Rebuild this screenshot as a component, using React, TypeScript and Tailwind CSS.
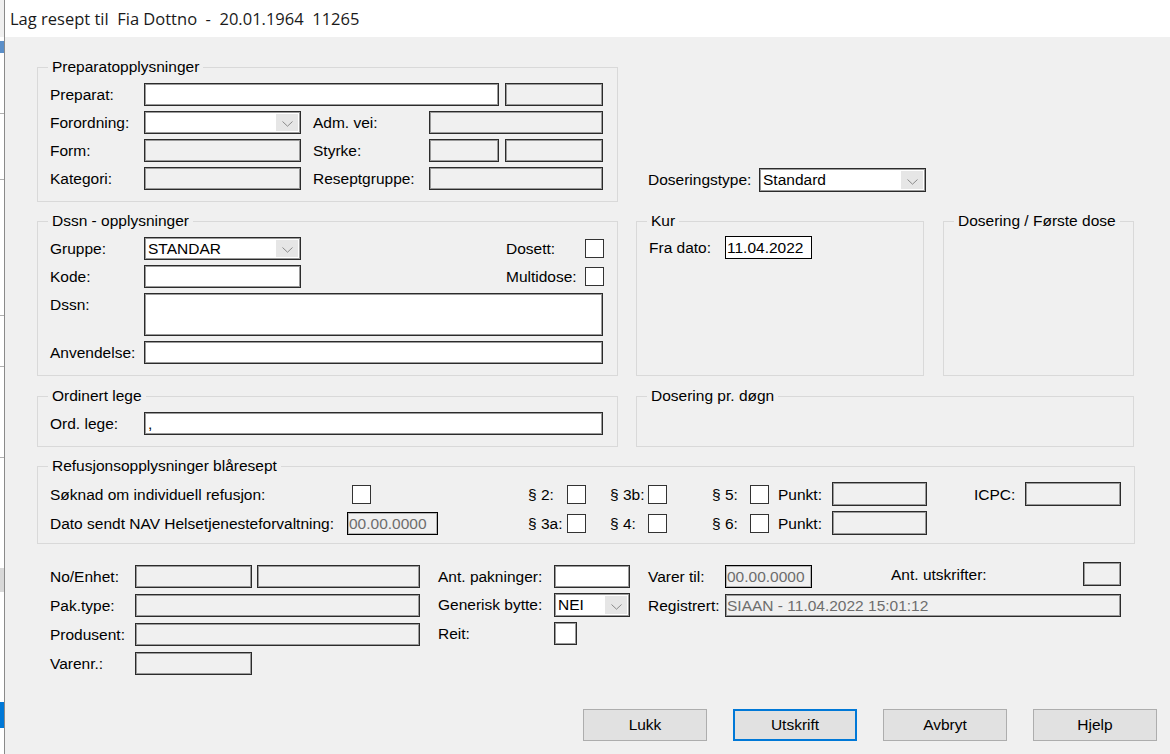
import React from "react";

type FP = { className?: string; white?: boolean; grey?: boolean; children?: React.ReactNode };

function Field({ className = "", white = false, grey = false, children }: FP) {
  return (
    <div
      className={`${white ? "bg-white" : "bg-[#f0f0f0]"} ${grey ? "text-[#6d6d6d]" : "text-black"} h-[23px] shrink-0 border border-[#2b2b2b] shadow-[inset_0_0_0_1px_#9a9a9a] px-[3px] leading-[21px] overflow-hidden whitespace-nowrap ${className}`}
    >
      {children}
    </div>
  );
}

function DateField({ className = "", grey = false, children }: FP) {
  return (
    <div
      className={`${grey ? "bg-[#f0f0f0] text-[#6d6d6d] shadow-[inset_0_0_0_1px_#b4b4b4]" : "bg-white text-black"} h-[23px] shrink-0 border border-black px-[1px] leading-[21px] overflow-hidden whitespace-nowrap ${className}`}
    >
      {children}
    </div>
  );
}

function Chevron() {
  return (
    <svg width="11" height="6" viewBox="0 0 11 6">
      <path d="M0.5 0.5 L5.5 5.2 L10.5 0.5" fill="none" stroke="#8a8a8a" strokeWidth="1" />
    </svg>
  );
}

function Select({ className = "", children }: FP) {
  return (
    <div
      className={`flex shrink-0 border border-[#2b2b2b] shadow-[inset_0_0_0_1px_#9a9a9a] bg-white ${className}`}
    >
      <div className="flex-1 px-[3px] leading-[21px] whitespace-nowrap overflow-hidden">{children}</div>
      <div className="w-[22px] my-[2px] mr-[2px] bg-[#e6e6e6] flex items-end justify-center pb-[4px]">
        <Chevron />
      </div>
    </div>
  );
}

function Check({ className = "" }: FP) {
  return <div className={`w-[19px] h-[19px] shrink-0 bg-white border border-[#333333] ${className}`} />;
}

function Group({
  title,
  className = "",
  inner = "",
  children,
}: {
  title: string;
  className?: string;
  inner?: string;
  children?: React.ReactNode;
}) {
  return (
    <fieldset className={`border border-[#d9d9d9] min-w-0 shrink-0 ${className}`}>
      <legend className="ml-[10px] px-[4px] leading-[16px]">{title}</legend>
      <div className={inner}>{children}</div>
    </fieldset>
  );
}

export default function App() {
  return (
    <div className="w-[1170px] h-[754px] flex overflow-hidden font-['Liberation_Sans',Arial,sans-serif] text-[15.5px] text-black bg-white">
      {/* background window sliver */}
      <div className="w-[4px] shrink-0 flex flex-col bg-white">
        <div className="h-[37px] bg-[#f0f0f0]" />
        <div className="h-[12px] bg-[#5b8fc9] mt-[4px]" />
        <div className="h-px bg-[#b0b0b0] mt-[60px]" />
        <div className="h-px bg-[#b0b0b0] mt-[65px]" />
        <div className="h-px bg-[#b0b0b0] mt-[135px]" />
        <div className="h-px bg-[#b0b0b0] mt-[50px]" />
        <div className="h-px bg-[#b0b0b0] mt-[90px]" />
        <div className="h-[24px] bg-[#d8d8d8] mt-[110px]" />
        <div className="h-[26px] bg-[#0078d7] mt-[110px]" />
      </div>

      <div className="flex-1 flex flex-col border-l border-[#8a8a8a]">
        {/* title bar */}
        <div className="h-[37px] shrink-0 bg-white pl-[5px] leading-[37px] font-['Open_Sans','Noto_Sans',sans-serif] text-[16.5px] text-[#1a1a1a] whitespace-pre">
          Lag resept til  Fia Dottno  -  20.01.1964  11265
        </div>

        {/* body */}
        <div className="flex-1 flex flex-col bg-[#f0f0f0] pl-[32px] pt-[22px]">
          {/* row 1 */}
          <div className="flex items-end">
            <Group title="Preparatopplysninger" className="w-[581px]" inner="pl-[12px] pt-[8px] pb-[11px] flex flex-col gap-[5px]">
              <div className="flex h-[23px]">
                <span className="w-[94px] shrink-0 leading-[23px]">Preparat:</span>
                <Field white className="w-[355px]" />
                <Field className="w-[98px] ml-[6px]" />
              </div>
              <div className="flex h-[23px]">
                <span className="w-[94px] shrink-0 leading-[23px]">Forordning:</span>
                <Select className="w-[157px] h-[23px]" />
                <span className="w-[116px] ml-[12px] shrink-0 leading-[23px]">Adm. vei:</span>
                <Field className="w-[174px]" />
              </div>
              <div className="flex h-[23px]">
                <span className="w-[94px] shrink-0 leading-[23px]">Form:</span>
                <Field className="w-[157px]" />
                <span className="w-[116px] ml-[12px] shrink-0 leading-[23px]">Styrke:</span>
                <Field className="w-[70px]" />
                <Field className="w-[98px] ml-[6px]" />
              </div>
              <div className="flex h-[23px]">
                <span className="w-[94px] shrink-0 leading-[23px]">Kategori:</span>
                <Field className="w-[157px]" />
                <span className="w-[116px] ml-[12px] shrink-0 leading-[23px]">Reseptgruppe:</span>
                <Field className="w-[174px]" />
              </div>
            </Group>
            <div className="flex ml-[30px] mb-[10px]">
              <span className="w-[111px] shrink-0 leading-[23px]">Doseringstype:</span>
              <Select className="w-[167px] h-[24px]">Standard</Select>
            </div>
          </div>

          {/* row 2 */}
          <div className="flex mt-[11px]">
            <Group title="Dssn - opplysninger" className="w-[581px]" inner="pl-[12px] pr-[13px] pt-[8px] pb-[11px] flex flex-col gap-[5px]">
              <div className="flex h-[23px] items-center">
                <span className="w-[94px] shrink-0 leading-[23px]">Gruppe:</span>
                <Select className="w-[157px] h-[23px]">STANDAR</Select>
                <div className="flex-1" />
                <span className="w-[79px] shrink-0 leading-[23px]">Dosett:</span>
                <Check />
              </div>
              <div className="flex h-[23px] items-center">
                <span className="w-[94px] shrink-0 leading-[23px]">Kode:</span>
                <Field white className="w-[157px]" />
                <div className="flex-1" />
                <span className="w-[79px] shrink-0 leading-[23px]">Multidose:</span>
                <Check />
              </div>
              <div className="flex">
                <span className="w-[94px] shrink-0 leading-[23px]">Dssn:</span>
                <Field white className="w-[459px] !h-[43px]" />
              </div>
              <div className="flex h-[23px]">
                <span className="w-[94px] shrink-0 leading-[23px]">Anvendelse:</span>
                <Field white className="w-[459px]" />
              </div>
            </Group>
            <Group title="Kur" className="w-[288px] ml-[18px]" inner="pl-[12px] pt-[7px]">
              <div className="flex h-[23px]">
                <span className="w-[76px] shrink-0 leading-[23px]">Fra dato:</span>
                <DateField className="w-[87px]">11.04.2022</DateField>
              </div>
            </Group>
            <Group title="Dosering / Første dose" className="w-[191px] ml-[19px]" />
          </div>

          {/* row 3 */}
          <div className="flex mt-[12px]">
            <Group title="Ordinert lege" className="w-[581px]" inner="pl-[12px] pt-[8px] pb-[11px]">
              <div className="flex h-[23px]">
                <span className="w-[94px] shrink-0 leading-[23px]">Ord. lege:</span>
                <Field white className="w-[459px]">,</Field>
              </div>
            </Group>
            <Group title="Dosering pr. døgn" className="w-[498px] ml-[18px]" />
          </div>

          {/* row 4 */}
          <div className="flex mt-[11px]">
            <Group title="Refusjonsopplysninger blåresept" className="w-[1098px]" inner="pl-[12px] pt-[8px] pb-[8px] flex flex-col gap-[5px]">
              <div className="flex h-[24px] items-center">
                <span className="w-[302px] shrink-0 leading-[23px]">Søknad om individuell refusjon:</span>
                <Check />
                <span className="w-[39px] ml-[157px] shrink-0 leading-[23px]">§ 2:</span>
                <Check />
                <span className="w-[38px] ml-[24px] shrink-0 leading-[23px]">§ 3b:</span>
                <Check />
                <span className="w-[38px] ml-[45px] shrink-0 leading-[23px]">§ 5:</span>
                <Check />
                <span className="w-[54px] ml-[9px] shrink-0 leading-[23px]">Punkt:</span>
                <Field className="w-[95px] !h-[24px]" />
                <span className="w-[51px] ml-[47px] shrink-0 leading-[23px]">ICPC:</span>
                <Field className="w-[96px] !h-[24px]" />
              </div>
              <div className="flex h-[24px] items-center">
                <span className="w-[297px] shrink-0 leading-[23px]">Dato sendt NAV Helsetjenesteforvaltning:</span>
                <DateField grey className="w-[91px]">00.00.0000</DateField>
                <span className="w-[39px] ml-[90px] shrink-0 leading-[23px]">§ 3a:</span>
                <Check />
                <span className="w-[38px] ml-[24px] shrink-0 leading-[23px]">§ 4:</span>
                <Check />
                <span className="w-[38px] ml-[45px] shrink-0 leading-[23px]">§ 6:</span>
                <Check />
                <span className="w-[54px] ml-[9px] shrink-0 leading-[23px]">Punkt:</span>
                <Field className="w-[95px] !h-[24px]" />
              </div>
            </Group>
          </div>

          {/* row 5 */}
          <div className="flex items-start mt-[18px] pl-[13px]">
            <div className="w-[370px] shrink-0 mt-[3px] flex flex-col gap-[6px]">
              <div className="flex h-[23px]">
                <span className="w-[85px] shrink-0 leading-[23px]">No/Enhet:</span>
                <Field className="w-[117px]" />
                <Field className="w-[163px] ml-[5px]" />
              </div>
              <div className="flex h-[23px]">
                <span className="w-[85px] shrink-0 leading-[23px]">Pak.type:</span>
                <Field className="w-[285px]" />
              </div>
              <div className="flex h-[23px]">
                <span className="w-[85px] shrink-0 leading-[23px]">Produsent:</span>
                <Field className="w-[285px]" />
              </div>
              <div className="flex h-[23px]">
                <span className="w-[85px] shrink-0 leading-[23px]">Varenr.:</span>
                <Field className="w-[117px]" />
              </div>
            </div>

            <div className="w-[192px] shrink-0 ml-[18px] mt-[3px] flex flex-col gap-[5px]">
              <div className="flex h-[23px]">
                <span className="w-[116px] shrink-0 leading-[23px]">Ant. pakninger:</span>
                <Field white className="w-[76px]" />
              </div>
              <div className="flex h-[24px]">
                <span className="w-[116px] shrink-0 leading-[24px]">Generisk bytte:</span>
                <Select className="w-[76px] h-[24px]">NEI</Select>
              </div>
              <div className="flex h-[23px]">
                <span className="w-[116px] shrink-0 leading-[23px]">Reit:</span>
                <div className="w-[23px] h-[23px] bg-white border border-[#2b2b2b] shadow-[inset_0_0_0_1px_#9a9a9a]" />
              </div>
            </div>

            <div className="ml-[18px] flex flex-col">
              <div className="flex items-start h-[26px]">
                <span className="w-[77px] mt-[3px] shrink-0 leading-[23px]">Varer til:</span>
                <DateField grey className="w-[87px] mt-[3px]">00.00.0000</DateField>
                <span className="w-[192px] ml-[79px] mt-[1px] shrink-0 leading-[23px]">Ant. utskrifter:</span>
                <div className="w-[38px] h-[24px] bg-[#f0f0f0] border border-[#2b2b2b] shadow-[inset_0_0_0_1px_#9a9a9a]" />
              </div>
              <div className="flex h-[23px] mt-[6px]">
                <span className="w-[77px] shrink-0 leading-[23px]">Registrert:</span>
                <Field grey className="w-[396px] !px-[1px]">SIAAN - 11.04.2022 15:01:12</Field>
              </div>
            </div>
          </div>

          {/* buttons */}
          <div className="mt-auto flex justify-end gap-[26px] pr-[13px] pb-[13px]">
            <button className="w-[124px] h-[32px] bg-[#e1e1e1] border border-[#adadad] leading-[30px]">Lukk</button>
            <button className="w-[124px] h-[32px] bg-[#e1e1e1] border-2 border-[#0078d7] leading-[28px]">Utskrift</button>
            <button className="w-[124px] h-[32px] bg-[#e1e1e1] border border-[#adadad] leading-[30px]">Avbryt</button>
            <button className="w-[124px] h-[32px] bg-[#e1e1e1] border border-[#adadad] leading-[30px]">Hjelp</button>
          </div>
        </div>
      </div>
    </div>
  );
}
